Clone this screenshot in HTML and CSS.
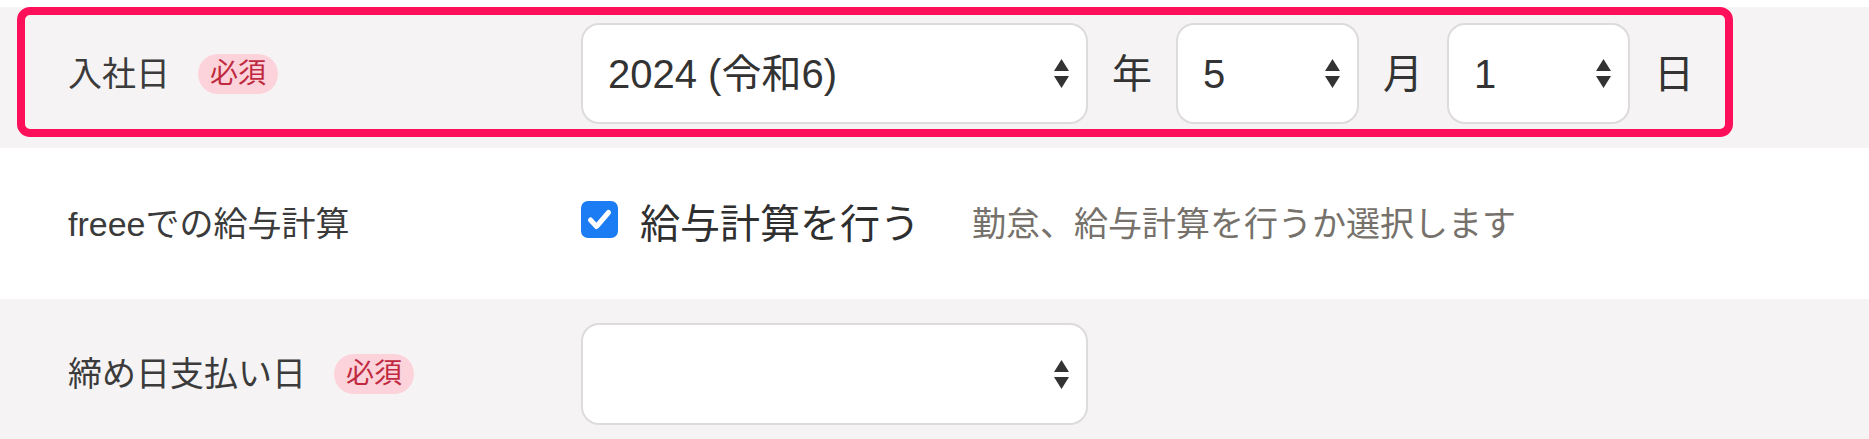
FILE: index.html
```html
<!DOCTYPE html>
<html lang="ja">
<head>
<meta charset="utf-8">
<title>入社日</title>
<link rel="stylesheet" href="styles.css">
</head>
<body>
<div class="form">
  <div class="row row-gray row-first highlighted">
    <div class="label-col">
      <span class="label">入社日</span>
      <span class="badge">必須</span>
    </div>
    <div class="select select-year">
      <span class="select-value">2024 (令和6)</span>
      <svg class="arrows" width="15" height="29" viewBox="0 0 15 29"><path d="M7.5 0 L15 12 L0 12 Z M0 17 L15 17 L7.5 29 Z" fill="#333"/></svg>
    </div>
    <span class="unit">年</span>
    <div class="select select-small">
      <span class="select-value">5</span>
      <svg class="arrows" width="15" height="29" viewBox="0 0 15 29"><path d="M7.5 0 L15 12 L0 12 Z M0 17 L15 17 L7.5 29 Z" fill="#333"/></svg>
    </div>
    <span class="unit">月</span>
    <div class="select select-small">
      <span class="select-value">1</span>
      <svg class="arrows" width="15" height="29" viewBox="0 0 15 29"><path d="M7.5 0 L15 12 L0 12 Z M0 17 L15 17 L7.5 29 Z" fill="#333"/></svg>
    </div>
    <span class="unit">日</span>
  </div>

  <div class="row row-white">
    <div class="label-col">
      <span class="label">freeeでの給与計算</span>
    </div>
    <span class="checkbox">
      <svg width="37" height="37" viewBox="0 0 37 37"><path d="M9.5 19 L15.5 25.5 L27.5 11.5" fill="none" stroke="#fff" stroke-width="5" stroke-linecap="round" stroke-linejoin="round"/></svg>
    </span>
    <span class="check-label">給与計算を行う</span>
    <span class="help">勤怠、給与計算を行うか選択します</span>
  </div>

  <div class="row row-gray row-last">
    <div class="label-col">
      <span class="label">締め日支払い日</span>
      <span class="badge">必須</span>
    </div>
    <div class="select select-year">
      <span class="select-value"></span>
      <svg class="arrows" width="15" height="29" viewBox="0 0 15 29"><path d="M7.5 0 L15 12 L0 12 Z M0 17 L15 17 L7.5 29 Z" fill="#333"/></svg>
    </div>
  </div>
</div>
</body>
</html>
```

FILE: styles.css
```css
html, body {
  margin: 0;
  padding: 0;
  background: #ffffff;
}

body {
  font-family: "Liberation Sans", "Noto Sans CJK JP", sans-serif;
  color: #3a3a3a;
  overflow: hidden;
}

.form {
  padding-top: 7px;
}

.row {
  display: flex;
  align-items: center;
  padding-left: 68px;
  box-sizing: border-box;
}

.row-gray {
  background: #f5f3f4;
}

.row-white {
  background: #ffffff;
  height: 151px;
}

.row-first {
  height: 141px;
  padding-top: 16px;
  padding-bottom: 24px;
}

.row-last {
  padding-top: 24px;
  padding-bottom: 24px;
}

.highlighted {
  position: relative;
}

.highlighted::after {
  content: "";
  position: absolute;
  left: 17px;
  top: 0;
  width: 1716px;
  height: 130px;
  box-sizing: border-box;
  border: 8px solid #fe0f59;
  border-radius: 13px;
  pointer-events: none;
}

.label-col {
  width: 513px;
  flex: none;
  display: flex;
  align-items: center;
  gap: 28px;
}

.label {
  font-size: 34px;
  line-height: 44px;
  color: #3b3b3b;
  white-space: nowrap;
}

.badge {
  display: inline-block;
  height: 40px;
  line-height: 40px;
  padding: 0 12px;
  border-radius: 20px;
  background: #fcd3da;
  color: #c02a40;
  font-size: 28px;
}

.select {
  flex: none;
  display: flex;
  align-items: center;
  justify-content: space-between;
  height: 101px;
  box-sizing: border-box;
  border: 2px solid #dddbdb;
  border-radius: 18px;
  background: #ffffff;
  padding: 0 17px 0 25px;
  font-size: 40px;
  color: #333333;
}

.row-last .select {
  height: 102px;
}

.select-year {
  width: 507px;
}

.select-small {
  width: 183px;
}

.select-value {
  line-height: 48px;
  white-space: nowrap;
}

.arrows {
  display: block;
  flex: none;
}

.unit {
  font-size: 40px;
  line-height: 48px;
  margin: 0 24px;
  color: #333333;
}

.checkbox {
  flex: none;
  width: 37px;
  height: 37px;
  border-radius: 7px;
  background: #1b7cf3;
  margin-bottom: 8px;
}

.checkbox svg {
  display: block;
}

.check-label {
  margin-left: 22px;
  font-size: 40px;
  line-height: 48px;
  color: #2f2f2f;
  white-space: nowrap;
}

.help {
  margin-left: 52px;
  font-size: 34px;
  line-height: 44px;
  color: #76716b;
  white-space: nowrap;
}
```
